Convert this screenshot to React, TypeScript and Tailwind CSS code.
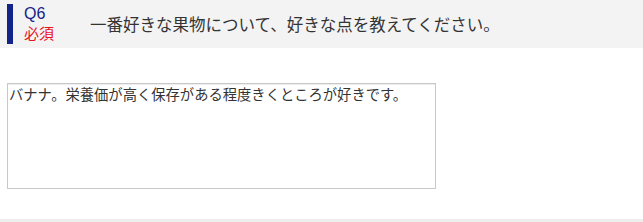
export default function App() {
  const font = { fontFamily: '"Liberation Sans", "Noto Sans CJK JP", sans-serif' }

  return (
    <div className="flex h-[222px] w-full flex-col bg-white" style={font}>
      {/* 設問ヘッダー */}
      <div className="flex h-12 items-center bg-[#f3f3f3] pl-[7px]">
        <div className="h-10 w-[6px] bg-[#14238a]" />
        <div className="ml-[11px] flex w-[66px] flex-col leading-[20px]">
          <span className="text-[16px] text-[#14238a]">Q6</span>
          <span className="text-[15px] text-[#e8141c]">必須</span>
        </div>
        <p className="mt-[3px] text-[16.5px] text-[#333333]">
          一番好きな果物について、好きな点を教えてください。
        </p>
      </div>

      {/* 回答欄 */}
      <div className="pl-[7px] pt-[35px]">
        <textarea
          readOnly
          defaultValue="バナナ。栄養価が高く保存がある程度きくところが好きです。"
          className="block h-[106px] w-[429px] resize-none border border-[#c8c8c8] bg-white px-[1px] py-[1px] text-[14.3px] leading-[21px] text-[#333333] shadow-[inset_0_1px_1px_rgba(0,0,0,0.08)] outline-none"
          style={font}
        />
      </div>

      <div className="mt-auto h-[3px] w-full bg-[#eeeeee]" />
    </div>
  )
}
